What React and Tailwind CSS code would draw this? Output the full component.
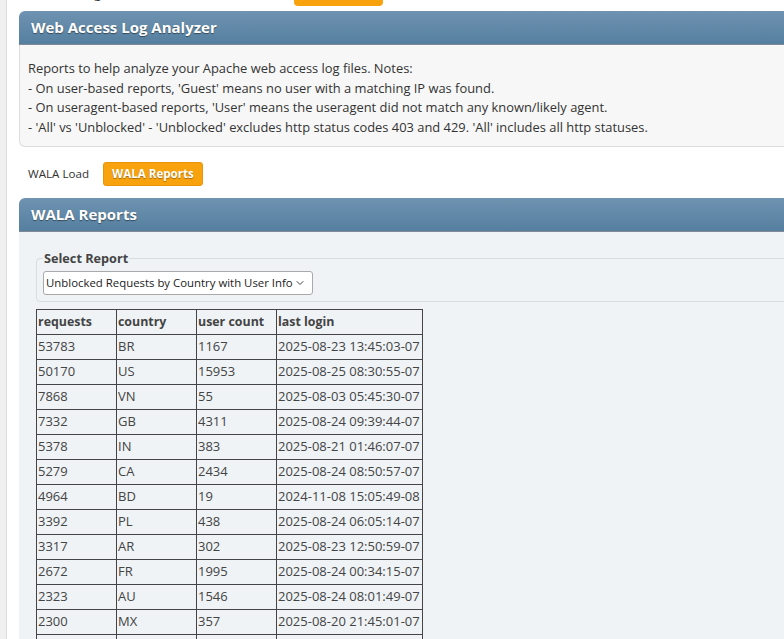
import React from 'react';
import { ChevronDown } from 'lucide-react';

const rows = [
  ['53783', 'BR', '1167', '2025-08-23 13:45:03-07'],
  ['50170', 'US', '15953', '2025-08-25 08:30:55-07'],
  ['7868', 'VN', '55', '2025-08-03 05:45:30-07'],
  ['7332', 'GB', '4311', '2025-08-24 09:39:44-07'],
  ['5378', 'IN', '383', '2025-08-21 01:46:07-07'],
  ['5279', 'CA', '2434', '2025-08-24 08:50:57-07'],
  ['4964', 'BD', '19', '2024-11-08 15:05:49-08'],
  ['3392', 'PL', '438', '2025-08-24 06:05:14-07'],
  ['3317', 'AR', '302', '2025-08-23 12:50:59-07'],
  ['2672', 'FR', '1995', '2025-08-24 00:34:15-07'],
  ['2323', 'AU', '1546', '2025-08-24 08:01:49-07'],
  ['2300', 'MX', '357', '2025-08-20 21:45:01-07'],
  ['2101', 'DE', '1203', '2025-08-24 10:12:33-07'],
];

const PanelHeader = ({ title }) => (
  <div className="h-[34px] flex items-center px-3 rounded-tl-[6px] bg-gradient-to-b from-[#6f93b1] to-[#557f9f] border-b border-[#7f8a94]">
    <h2 className="text-[15px] font-bold text-white [text-shadow:0_1px_1px_rgba(0,0,0,0.45)]">{title}</h2>
  </div>
);

export default function App() {
  return (
    <div className="flex h-[639px] w-[784px] overflow-hidden bg-white text-[#333] font-['Open_Sans','Noto_Sans',sans-serif]">
      {/* left edge of the sidebar */}
      <div className="w-[7px] shrink-0 bg-[#f0f0f0] border-r border-[#dcdcdc]" />

      <div className="flex-1 min-w-0">
        {/* scrolled-off top nav */}
        <div className="h-[6px] overflow-hidden">
          <div className="-mt-[18px] flex items-center h-[24px] pl-[87px]">
            <span className="text-[13px]">g</span>
            <div className="ml-[193px] w-[89px] h-[24px] rounded-[4px] bg-[#f8a20d]" />
          </div>
        </div>

        {/* intro panel */}
        <div className="ml-[12px] mt-[5px] w-[820px]">
          <PanelHeader title="Web Access Log Analyzer" />
          <div className="bg-[#f7f7f7] border border-t-0 border-[#dcdcdc] rounded-bl-[6px] pl-[8px] pt-[14px] pb-[9px] text-[12.9px] leading-[19.5px]">
            <p>Reports to help analyze your Apache web access log files. Notes:</p>
            <p>- On user-based reports, 'Guest' means no user with a matching IP was found.</p>
            <p>- On useragent-based reports, 'User' means the useragent did not match any known/likely agent.</p>
            <p>- 'All' vs 'Unblocked' - 'Unblocked' excludes http status codes 403 and 429. 'All' includes all http statuses.</p>
          </div>
        </div>

        {/* tabs */}
        <div className="flex items-center gap-[14px] pl-[21px] mt-[15px] h-[24px] text-[11.6px]">
          <span className="text-[#333]">WALA Load</span>
          <button className="h-[24px] px-[8px] rounded-[3px] bg-[#f8a20d] border border-[#e8950a] text-white font-bold [text-shadow:0_1px_1px_rgba(0,0,0,0.35)]">
            WALA Reports
          </button>
        </div>

        {/* reports panel */}
        <div className="ml-[12px] mt-[12px] w-[820px]">
          <PanelHeader title="WALA Reports" />
          <div className="bg-[#eff3f6] pl-[17px] pt-[17px] pb-4">
            <fieldset className="border border-[#d9dde0] rounded-[4px] px-[6px] pb-[6px]">
              <legend className="px-[1px] text-[12.7px] font-bold text-[#444]">Select Report</legend>
              <div className="mt-[3px] w-[270px] h-[24px] flex items-center justify-between bg-white border border-[#a9a9a9] rounded-[3px] pl-[2px] pr-[6px] text-[11.4px] text-[#222] whitespace-nowrap">
                <span>Unblocked Requests by Country with User Info</span>
                <ChevronDown size={12} strokeWidth={2} className="shrink-0 text-[#444]" />
              </div>
            </fieldset>

            <table className="mt-[7px] border-collapse text-[13px] text-[#444]">
              <thead>
                <tr className="h-[25px] text-[12.4px]">
                  <th className="w-[80px] border border-[#444] px-[1px] text-left font-bold">requests</th>
                  <th className="w-[80px] border border-[#444] px-[1px] text-left font-bold">country</th>
                  <th className="w-[80px] border border-[#444] px-[1px] text-left font-bold">user count</th>
                  <th className="w-[146px] border border-[#444] px-[1px] text-left font-bold">last login</th>
                </tr>
              </thead>
              <tbody>
                {rows.map((r) => (
                  <tr key={r[0]} className="h-[25px]">
                    {r.map((c, i) => (
                      <td key={i} className="border border-[#444] px-[1px] whitespace-nowrap">{c}</td>
                    ))}
                  </tr>
                ))}
              </tbody>
            </table>
          </div>
        </div>
      </div>
    </div>
  );
}
